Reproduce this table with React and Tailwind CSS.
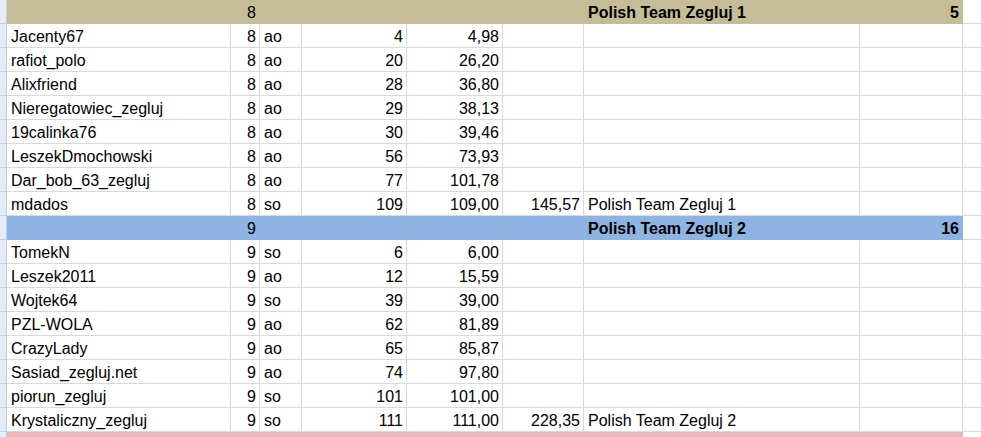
import React from "react";

const WCLS = [
  "w-[224px]",
  "w-[29px]",
  "w-[42px]",
  "w-[105px]",
  "w-[96px]",
  "w-[81px]",
  "w-[276px]",
  "w-[103px]",
];
const ALIGN = ["justify-start", "justify-end", "justify-start", "justify-end", "justify-end", "justify-end", "justify-start", "justify-end"];

const group1 = [
  ["Jacenty67", "8", "ao", "4", "4,98", "", "", ""],
  ["rafiot_polo", "8", "ao", "20", "26,20", "", "", ""],
  ["Alixfriend", "8", "ao", "28", "36,80", "", "", ""],
  ["Nieregatowiec_zegluj", "8", "ao", "29", "38,13", "", "", ""],
  ["19calinka76", "8", "ao", "30", "39,46", "", "", ""],
  ["LeszekDmochowski", "8", "ao", "56", "73,93", "", "", ""],
  ["Dar_bob_63_zegluj", "8", "ao", "77", "101,78", "", "", ""],
  ["mdados", "8", "so", "109", "109,00", "145,57", "Polish Team Zegluj 1", ""],
];
const group2 = [
  ["TomekN", "9", "so", "6", "6,00", "", "", ""],
  ["Leszek2011", "9", "ao", "12", "15,59", "", "", ""],
  ["Wojtek64", "9", "so", "39", "39,00", "", "", ""],
  ["PZL-WOLA", "9", "ao", "62", "81,89", "", "", ""],
  ["CrazyLady", "9", "ao", "65", "85,87", "", "", ""],
  ["Sasiad_zegluj.net", "9", "ao", "74", "97,80", "", "", ""],
  ["piorun_zegluj", "9", "so", "101", "101,00", "", "", ""],
  ["Krystaliczny_zegluj", "9", "so", "111", "111,00", "228,35", "Polish Team Zegluj 2", ""],
];

function Row({ cells, fill, bold }) {
  const border = fill ? "border-transparent" : "border-[#d9d9d9]";
  return (
    <div className="flex h-[24px]">
      <div className="w-[7px] h-[24px] shrink-0 bg-[#e4ecf7] border-r border-b border-[#c3cfdc] box-border" />
      {cells.map((c, i) => (
        <div
          key={i}
          className={`${WCLS[i]} ${ALIGN[i]} ${fill || ""} ${border} ${bold && i >= 6 ? "font-bold" : ""} shrink-0 h-[24px] box-border border-r border-b flex items-end pl-[4px] pr-[3px] pb-[1px] leading-[18px] whitespace-nowrap overflow-visible`}
        >
          {c}
        </div>
      ))}
      <div className="w-[18px] h-[24px] shrink-0 box-border border-b border-[#d9d9d9]" />
    </div>
  );
}

export default function App() {
  return (
    <div
      className="w-[981px] h-[437px] overflow-hidden bg-white text-black text-[16px]"
      style={{ fontFamily: '"Liberation Sans", Arial, sans-serif' }}
    >
      <Row cells={["", "8", "", "", "", "", "Polish Team Zegluj 1", "5"]} fill="bg-[#c4bd97]" bold />
      {group1.map((r, i) => (
        <Row key={"a" + i} cells={r} />
      ))}
      <Row cells={["", "9", "", "", "", "", "Polish Team Zegluj 2", "16"]} fill="bg-[#8db4e2]" bold />
      {group2.map((r, i) => (
        <Row key={"b" + i} cells={r} />
      ))}
      <Row cells={["", "", "", "", "", "", "", ""]} fill="bg-[#e6b8b7]" />
    </div>
  );
}
